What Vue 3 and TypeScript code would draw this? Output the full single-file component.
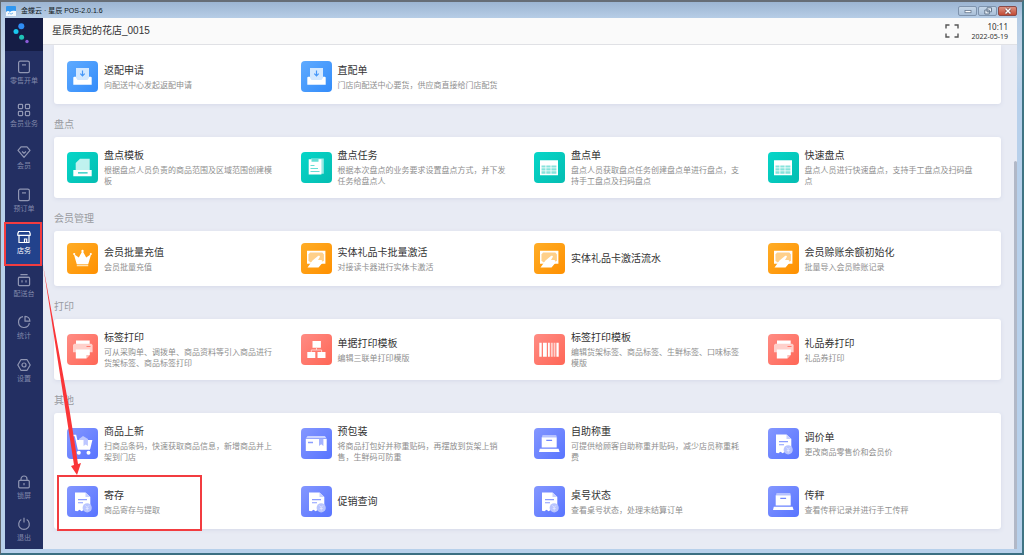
<script setup lang="ts">
interface Entry {
  title: string
  desc?: string
  icon: string
}
interface Section {
  heading?: string
  tone: string
  entries: Entry[]
}
interface NavEntry {
  label: string
  icon: string
  active?: boolean
}

const mainNav: NavEntry[] = [
  { label: '零售开单', icon: 'nav-bill' },
  { label: '会员业务', icon: 'nav-grid' },
  { label: '会员', icon: 'nav-gem' },
  { label: '预订单', icon: 'nav-bill' },
  { label: '店务', icon: 'nav-store', active: true },
  { label: '配送台', icon: 'nav-desk' },
  { label: '统计', icon: 'nav-pie' },
  { label: '设置', icon: 'nav-gear' },
]

const footNav: NavEntry[] = [
  { label: '锁屏', icon: 'nav-lock' },
  { label: '退出', icon: 'nav-power' },
]

const sections: Section[] = [
  {
    tone: 'blue',
    entries: [
      { title: '返配申请', desc: '向配送中心发起返配申请', icon: 'tray' },
      { title: '直配单', desc: '门店向配送中心要货，供应商直接给门店配货', icon: 'tray' },
    ],
  },
  {
    heading: '盘点',
    tone: 'teal',
    entries: [
      { title: '盘点模板', desc: '根据盘点人员负责的商品范围及区域范围创建模板', icon: 'scanner' },
      { title: '盘点任务', desc: '根据本次盘点的业务要求设置盘点方式，并下发任务给盘点人', icon: 'clipboard' },
      { title: '盘点单', desc: '盘点人员获取盘点任务创建盘点单进行盘点，支持手工盘点及扫码盘点', icon: 'sheet' },
      { title: '快速盘点', desc: '盘点人员进行快速盘点，支持手工盘点及扫码盘点', icon: 'sheet' },
    ],
  },
  {
    heading: '会员管理',
    tone: 'orange',
    entries: [
      { title: '会员批量充值', desc: '会员批量充值', icon: 'crown' },
      { title: '实体礼品卡批量激活', desc: '对接读卡器进行实体卡激活', icon: 'hand' },
      { title: '实体礼品卡激活流水', icon: 'hand' },
      { title: '会员赊账余额初始化', desc: '批量导入会员赊账记录', icon: 'hand' },
    ],
  },
  {
    heading: '打印',
    tone: 'red',
    entries: [
      { title: '标签打印', desc: '可从采购单、调拨单、商品资料等引入商品进行货架标签、商品标签打印', icon: 'printer' },
      { title: '单据打印模板', desc: '编辑三联单打印模版', icon: 'tree' },
      { title: '标签打印模板', desc: '编辑货架标签、商品标签、生鲜标签、口味标签模版', icon: 'barcode' },
      { title: '礼品券打印', desc: '礼品券打印', icon: 'printer' },
    ],
  },
  {
    heading: '其他',
    tone: 'indigo',
    entries: [
      { title: '商品上新', desc: '扫商品条码，快速获取商品信息，新增商品并上架到门店', icon: 'cart' },
      { title: '预包装', desc: '将商品打包好并称重贴码，再摆放到货架上销售，生鲜码可防重', icon: 'package' },
      { title: '自助称重', desc: '可提供给顾客自助称重并贴码，减少店员称重耗费', icon: 'scale' },
      { title: '调价单', desc: '更改商品零售价和会员价', icon: 'receipt' },
      { title: '寄存', desc: '商品寄存与提取', icon: 'receipt' },
      { title: '促销查询', icon: 'receipt' },
      { title: '桌号状态', desc: '查看桌号状态，处理未结算订单', icon: 'receipt' },
      { title: '传秤', desc: '查看传秤记录并进行手工传秤', icon: 'scale' },
    ],
  },
]
</script>

<template>
  <div class="window">
    <svg class="defs" aria-hidden="true">
      <symbol id="nav-bill" viewBox="0 0 14 14">
        <rect x="1.6" y="1.2" width="10.8" height="11.4" rx="1.6" /><path d="M5 4.9h4" />
      </symbol>
      <symbol id="nav-grid" viewBox="0 0 14 14">
        <rect x="1.4" y="1.4" width="4.2" height="4.2" rx=".8" /><rect x="8.4" y="1.4" width="4.2" height="4.2" rx=".8" />
        <rect x="1.4" y="8.4" width="4.2" height="4.2" rx=".8" /><rect x="8.4" y="8.4" width="4.2" height="4.2" rx=".8" />
      </symbol>
      <symbol id="nav-gem" viewBox="0 0 14 14">
        <path d="M4 1.8h6l3 3.6-6 7-6-7z" stroke-linejoin="round" /><path d="M5 6.5l2 1.8 2-1.8" />
      </symbol>
      <symbol id="nav-store" viewBox="0 0 14 14">
        <path d="M1.6 1.5h10.8l.8 2.3v1.5H.8V3.8z" stroke-linejoin="round" /><path d="M2 5.5v7h10v-7M7.5 12.3V9h2.2v3.3" />
      </symbol>
      <symbol id="nav-desk" viewBox="0 0 14 14">
        <rect x="1.4" y="4.4" width="11.2" height="8.2" rx="1" /><path d="M3.4 1.6h7.2M1.4 4.4h11.2M5 7.2v2.2M9 7.2v2.2" />
      </symbol>
      <symbol id="nav-pie" viewBox="0 0 14 14">
        <path d="M6 1.6a5.5 5.5 0 1 0 6.4 6.6" /><path d="M8 1.3v4.9h4.9A5 5 0 0 0 8 1.3z" stroke-linejoin="round" />
      </symbol>
      <symbol id="nav-gear" viewBox="0 0 14 14">
        <path d="M3.9 1.7h6.2L13.2 7l-3.1 5.3H3.9L.8 7z" stroke-linejoin="round" /><circle cx="7" cy="7" r="2" />
      </symbol>
      <symbol id="nav-lock" viewBox="0 0 14 14">
        <rect x="1.7" y="5.4" width="10.6" height="7.4" rx="1" /><path d="M4 5.3V4a3 3 0 0 1 6 0v1.3M7 8v2.2" />
      </symbol>
      <symbol id="nav-power" viewBox="0 0 14 14">
        <path d="M4.3 2.6a5.3 5.3 0 1 0 5.4 0M7 .8v4.8" />
      </symbol>

      <symbol id="tray" viewBox="0 0 31 31">
        <path d="M6.3 16.8q0-1 1-1h2.2l1.5 3h9l1.500-3h2.200q1 0 1 1v6.900H6.300z" fill="#fff" />
        <path d="M9 7h13v10l-2 2h-9l-2-2z" fill="#d3e8ff" />
        <path d="M15.500 9.500v5M13.300 12.600l2.200 2.300 2.200-2.300" fill="none" stroke="#4697f8" stroke-width="1.200" />
      </symbol>
      <symbol id="scanner" viewBox="0 0 31 31">
        <path d="M13 6.700h9.700V18h-14v-7z" fill="#fff" opacity=".75" />
        <path d="M6.300 17.900h18.400v6.400H6.300z" fill="#fff" /><path d="M11 20.900h9.600" stroke="#10c9bd" stroke-width="1.400" />
      </symbol>
      <symbol id="clipboard" viewBox="0 0 31 31">
        <path d="M10 6.500h12.800v15.300H10z" fill="#fff" opacity=".6" />
        <path d="M7.700 7.300h12.700v15.200H7.700z" fill="#fff" /><path d="M10.500 6.800h7v3h-7z" fill="#67ded5" />
        <path d="M9.500 13.500h4M9.500 16.500h7.500M9.500 19.500h9" stroke="#67ded5" />
      </symbol>
      <symbol id="sheet" viewBox="0 0 31 31">
        <path d="M6 8.300h18v15H6z" fill="#fff" />
        <path d="M7.500 13.500h4v2h-4zM12.300 13.500h4.300v2h-4.300zM17.400 13.500h5v2h-5zM7.500 16.300h4v2.200h-4zM12.300 16.300h4.300v2.200h-4.300zM17.400 16.300h5v2.200h-5zM7.500 19.300h4v2.400h-4zM12.300 19.300h4.300v2.400h-4.300zM17.400 19.300h5v2.400h-5z" fill="#86e3dc" />
      </symbol>
      <symbol id="crown" viewBox="0 0 31 31">
        <path d="M6.800 11l5 3.400 3.700-6.600 3.700 6.600 5-3.400-2.900 10.100H9.700z" fill="#fff" />
        <circle cx="7.200" cy="11" r="1.100" fill="#fff" /><circle cx="15.500" cy="7.900" r="1.200" fill="#fff" /><circle cx="23.800" cy="11" r="1.100" fill="#fff" />
        <path d="M9.800 22.400h11.400" stroke="#ffe3b5" stroke-width="1.700" />
      </symbol>
      <symbol id="hand" viewBox="0 0 31 31">
        <path d="M6 7.800h18.400v13H6z" fill="#fff" />
        <path d="M9 9.400h12.400l1.500 2v5.800l-1.500 2H9l-1.500-2v-5.800z" fill="#ffd08a" />
        <path d="M6.500 24.500l5-7 5.800-4.700q2-.6 1.500 1.200l-1.800 3h3.500l1.500 2.300-4.500 5.200z" fill="#fff" />
      </symbol>
      <symbol id="printer" viewBox="0 0 31 31">
        <path d="M9 6.500h13.700v4H9z" fill="#fff" /><path d="M7.200 9.800h17.200l1.200 1.200v7.200H6V11z" fill="#ffd0cb" />
        <path d="M19.500 12.500h4" stroke="#ff7a6e" stroke-width="1.200" /><path d="M8.800 15.500h14v5l-3.500 4H8.800z" fill="#fff" /><path d="M19.300 24.500v-3.600h3.500z" fill="#ffc1bb" />
      </symbol>
      <symbol id="tree" viewBox="0 0 31 31">
        <path d="M11.500 7h8.400v6.700h-8.400zM6.300 18h8v6h-8zM16.500 18h8v6h-8z" fill="#fff" />
        <path d="M15.500 13.700v2.300M10.300 18v-2h10.300v2" fill="none" stroke="#ffd0cb" />
      </symbol>
      <symbol id="barcode" viewBox="0 0 31 31">
        <path d="M5.300 8.700h2.400v14H5.300zM9 8.700h3.800v14H9zM14 8.700h1.800v14H14zM22.400 8.700h2.300v14h-2.300z" fill="#fff" />
        <path d="M16.800 8.700h2v14h-2zM19.600 8.700h1.800v14h-1.800z" fill="#ffd0cb" />
      </symbol>
      <symbol id="cart" viewBox="0 0 31 31">
        <path d="M12 11l4-3 5 3v9h-9z" fill="#bdc7ff" />
        <path d="M5 7.500h3.500l3 13.500h11.500" fill="none" stroke="#fff" stroke-width="1.700" />
        <path d="M9.300 12h7.200v6l2.200-1.500 2.200 1.500v-6h4.500l-2.200 9H11.500z" fill="#fff" />
        <circle cx="11.800" cy="24.800" r="2" fill="#fff" /><circle cx="21.500" cy="24.800" r="2" fill="#fff" />
      </symbol>
      <symbol id="package" viewBox="0 0 31 31">
        <path d="M6.500 8h17.400l1.300 2H5.200z" fill="#ccd4ff" /><path d="M4.800 10.700h20.900V23H4.800z" fill="#fff" />
        <path d="M18 10.700h4.400V18l-2.200-1.700L18 18z" fill="#a5b4ff" /><path d="M7 14.500h5" stroke="#8c9eff" stroke-width="1.500" />
      </symbol>
      <symbol id="scale" viewBox="0 0 31 31">
        <path d="M8.500 7.200h13.700l.6 1.600H8z" fill="#ccd4ff" /><path d="M7.700 9.300h15v10.200h-15zM5.800 20.800h18.800l1 3.200H5z" fill="#fff" />
        <path d="M12.300 12.300h5.800" stroke="#7188ff" stroke-width="1.300" />
      </symbol>
      <symbol id="receipt" viewBox="0 0 31 31">
        <path d="M8 6.500h10.500l4.800 4.500v14l-2.100-1.300-2.100 1.500-2.200-1.500-2.200 1.500-2.200-1.500-2.200 1.500L8 24.800z" fill="#fff" />
        <path d="M18.500 6.500l4.800 4.500h-4.800z" fill="#c8d1ff" /><path d="M11 13.600h9M11 16.800h5" stroke="#8b9dff" stroke-width="1.100" />
        <circle cx="20.200" cy="21.800" r="4.600" fill="#b8c4ff" /><path d="M18.500 19.500l1.700 2 1.700-2M20.200 21.500v3M18.700 22.500h3" fill="none" stroke="#e4e8ff" stroke-width=".8" />
      </symbol>
    </svg>

    <div class="titlebar">
      <svg class="app-icon" viewBox="0 0 10 10" aria-hidden="true">
        <rect width="10" height="10" rx="1" fill="#3097f0" /><path d="M0 6q2-2 4 0 2-2 6-1v5H0z" fill="#f4faff" /><path d="M2 8l1.500-1L5 8.200 7 7" fill="none" stroke="#5aa9ea" stroke-width=".8" />
      </svg>
      <span class="app-name">金蝶云 · 星辰 POS-2.0.1.6</span>
      <div class="win-buttons">
        <button class="win-btn" type="button" aria-label="最小化">
          <svg viewBox="0 0 12 8"><rect x="3" y="3.500" width="6" height="2.200" fill="#fff" stroke="#66788e" stroke-width=".8" /></svg>
        </button>
        <button class="win-btn" type="button" aria-label="还原">
          <svg viewBox="0 0 12 8"><path d="M5 .8h4.500v4H5zM2.800 3h4.500v4H2.800z" fill="#e8eff7" stroke="#66788e" /></svg>
        </button>
        <button class="win-btn close" type="button" aria-label="关闭">
          <svg viewBox="0 0 12 8"><path d="M3.500 1.500l5 5M8.500 1.500l-5 5" stroke="#71413f" stroke-width="2.600" /><path d="M3.500 1.500l5 5M8.500 1.500l-5 5" stroke="#fff" stroke-width="1.500" /></svg>
        </button>
      </div>
    </div>

    <div class="client">
      <aside class="sidebar">
        <div class="logo">
          <svg viewBox="0 0 38 33" aria-hidden="true">
            <circle cx="16.300" cy="8.200" r="3" fill="#2f8df5" /><circle cx="11" cy="13.500" r="2.500" fill="#19c8ee" />
            <circle cx="16.600" cy="19.300" r="2.500" fill="#1fc3b6" /><circle cx="22" cy="23.500" r="1.700" fill="#8c5bd8" />
          </svg>
        </div>
        <nav class="nav">
          <div class="nav-main">
            <button v-for="n in mainNav" :key="n.label" type="button" class="nav-item" :class="{ active: n.active }">
              <svg class="nav-icon" aria-hidden="true"><use :href="'#' + n.icon" /></svg>
              <span>{{ n.label }}</span>
            </button>
          </div>
          <div class="nav-foot">
            <button v-for="n in footNav" :key="n.label" type="button" class="nav-item">
              <svg class="nav-icon" aria-hidden="true"><use :href="'#' + n.icon" /></svg>
              <span>{{ n.label }}</span>
            </button>
          </div>
        </nav>
      </aside>

      <div class="page">
        <header class="header">
          <h1 class="shop">星辰贵妃的花店_0015</h1>
          <button class="fullscreen" type="button" aria-label="全屏">
            <svg viewBox="0 0 14 14"><path d="M1 4.500V1h3.500M9.500 1H13v3.500M13 9.500V13H9.500M4.500 13H1V9.500" fill="none" stroke="#555" stroke-width="1.400" /></svg>
          </button>
          <div class="clock">
            <time class="time">10:11</time>
            <time class="date">2022-05-19</time>
          </div>
        </header>

        <div class="body">
          <main class="content">
            <section v-for="(s, i) in sections" :key="i">
              <h2 v-if="s.heading" class="heading">{{ s.heading }}</h2>
              <div class="card" :class="[s.tone, { continued: !s.heading }]">
                <button v-for="e in s.entries" :key="e.title" type="button" class="entry">
                  <svg class="tile" aria-hidden="true"><use :href="'#' + e.icon" /></svg>
                  <span class="texts">
                    <span class="title">{{ e.title }}</span>
                    <span v-if="e.desc" class="desc">{{ e.desc }}</span>
                  </span>
                </button>
              </div>
            </section>
          </main>
          <div class="scroll-track"><div class="scroll-thumb"></div></div>
        </div>
      </div>
    </div>

    <svg class="marks" aria-hidden="true">
      <rect x="5" y="223" width="36" height="42" stroke-width="2" />
      <rect x="58" y="476" width="143" height="54" stroke-width="2" />
      <path class="arrow" d="M43 265L74 465l-3 1 6 9 4-12-3 1L69.500 410z" />
    </svg>
  </div>
</template>

<style>
html,
body {
  margin: 0;
  background: #4e5558;
}
</style>

<style scoped>
.window {
  position: relative;
  box-sizing: border-box;
  display: flex;
  flex-direction: column;
  height: 100vh;
  overflow: hidden;
  padding: 0 5px 4px 4px;
  border-top: 2px solid #666d76;
  border-left: 1px solid #62686e;
  border-right: 2px solid #3f7484;
  border-bottom: 2px solid #3b6f82;
  background: linear-gradient(#9cb5d2, #b6cde6 16px, #c3d5e8 60px, #b7d0eb 90px);
  font-family: "Noto Sans", "Noto Sans CJK SC", sans-serif;
  color: #333;
}
button {
  margin: 0;
  padding: 0;
  border: 0;
  background: none;
  font: inherit;
  color: inherit;
  cursor: pointer;
}
h1,
h2 {
  margin: 0;
  font-weight: 400;
}
.defs {
  position: absolute;
  width: 0;
  height: 0;
}

.titlebar {
  flex: none;
  display: flex;
  align-items: center;
  height: 16px;
}
.app-icon {
  width: 10px;
  height: 10px;
  margin: 2px 5px 0 1px;
}
.app-name {
  flex: 1;
  padding-top: 2px;
  font: 7px/10px "Liberation Sans", "Noto Sans CJK SC", sans-serif;
  color: #101820;
}
.win-buttons {
  display: flex;
  gap: 1px;
  padding-top: 2px;
}
.win-btn {
  box-sizing: border-box;
  display: flex;
  align-items: center;
  justify-content: center;
  width: 19px;
  height: 10px;
  border: 1px solid #7e93ad;
  border-radius: 2px;
  background: linear-gradient(#c5d6e8, #a9bfd8);
}
.win-btn svg {
  width: 12px;
  height: 8px;
}
.win-btn.close {
  border-color: #8a4a48;
  background: linear-gradient(#dc9282, #c24a35);
}

.client {
  flex: 1;
  display: flex;
  min-height: 0;
}
.sidebar {
  flex: none;
  display: flex;
  flex-direction: column;
  width: 38px;
  background: #232f62;
}
.logo {
  flex: none;
  height: 33px;
  background: #151d45;
}
.logo svg {
  display: block;
  width: 38px;
  height: 33px;
}
.nav {
  flex: 1;
  display: flex;
  flex-direction: column;
  justify-content: space-between;
  padding-top: 1px;
}
.nav-main {
  display: flex;
  flex-direction: column;
  height: 68.5%;
}
.nav-foot {
  display: flex;
  flex-direction: column;
  height: 17%;
}
.nav-item {
  flex: 1;
  display: flex;
  flex-direction: column;
  align-items: center;
  gap: 2px;
  padding-top: 8px;
  font-size: 7px;
  line-height: 10px;
  color: #8188aa;
}
.nav-icon {
  width: 14px;
  height: 14px;
  fill: none;
  stroke: #9096b3;
  stroke-width: 1.2;
}
.nav-item.active {
  background: #22428c;
  color: #fff;
}
.nav-item.active .nav-icon {
  stroke: #fff;
}
.nav-foot .nav-item {
  padding-top: 10px;
}

.page {
  flex: 1;
  display: flex;
  flex-direction: column;
  min-width: 0;
  background: #e8ebf4;
}
.header {
  flex: none;
  box-sizing: border-box;
  display: flex;
  align-items: center;
  height: 27px;
  padding: 0 9px;
  border-bottom: 1px solid #e0e1e5;
  background: #fafafa;
}
.shop {
  flex: 1;
  font: 10px/14px "Liberation Sans", "Noto Sans CJK SC", sans-serif;
}
.fullscreen {
  display: flex;
  margin-right: 12px;
}
.fullscreen svg {
  width: 14px;
  height: 14px;
}
.clock {
  display: flex;
  flex-direction: column;
  align-items: flex-end;
}
.time {
  font-size: 8px;
  line-height: 11px;
}
.date {
  font-size: 7px;
  line-height: 10px;
}

.body {
  flex: 1;
  display: flex;
  min-height: 0;
}
.content {
  flex: 1;
  min-width: 0;
  overflow: hidden;
  padding: 0 13px 0 11px;
}
.heading {
  padding: 14px 0 7px;
  font-size: 10px;
  line-height: 12px;
  color: #999ba1;
}
.card {
  display: grid;
  grid-template-columns: repeat(4, 1fr);
  padding-left: 13px;
  border-radius: 3px;
  background: #fff;
  box-shadow: 0 1px 4px #d5d9e8;
}
.card.continued {
  padding-top: 4px;
  border-radius: 0 0 3px 3px;
}
.entry {
  display: flex;
  align-items: center;
  gap: 6px;
  padding: 12px 24px 12px 0;
  text-align: left;
}
.tile {
  flex: none;
  width: 31px;
  height: 31px;
  border-radius: 4px;
}
.blue .tile {
  background: linear-gradient(135deg, #5fabff, #338cfa);
}
.teal .tile {
  background: linear-gradient(135deg, #06d6c8, #05bdb2);
}
.orange .tile {
  background: linear-gradient(135deg, #ffad26, #ff9000);
}
.red .tile {
  background: linear-gradient(135deg, #ff8c84, #ff6656);
}
.indigo .tile {
  background: linear-gradient(135deg, #8497ff, #5874ff);
}
.texts {
  display: flex;
  flex-direction: column;
  gap: 2px;
  min-width: 0;
}
.title {
  font-size: 10px;
  line-height: 13px;
  color: #333;
}
.desc {
  font-size: 8px;
  line-height: 11px;
  color: #8e8e8e;
}
.scroll-track {
  flex: none;
  display: flex;
  flex-direction: column;
  justify-content: flex-end;
  width: 3px;
}
.scroll-thumb {
  height: 77%;
  border-radius: 2px 2px 0 0;
  background: #b1b8c7;
}

.marks {
  position: absolute;
  top: -2px;
  left: -1px;
  width: 100%;
  height: 100vh;
  fill: none;
  stroke: #f23c40;
  pointer-events: none;
}
.marks .arrow {
  fill: #fa3538;
  stroke: none;
}
</style>
